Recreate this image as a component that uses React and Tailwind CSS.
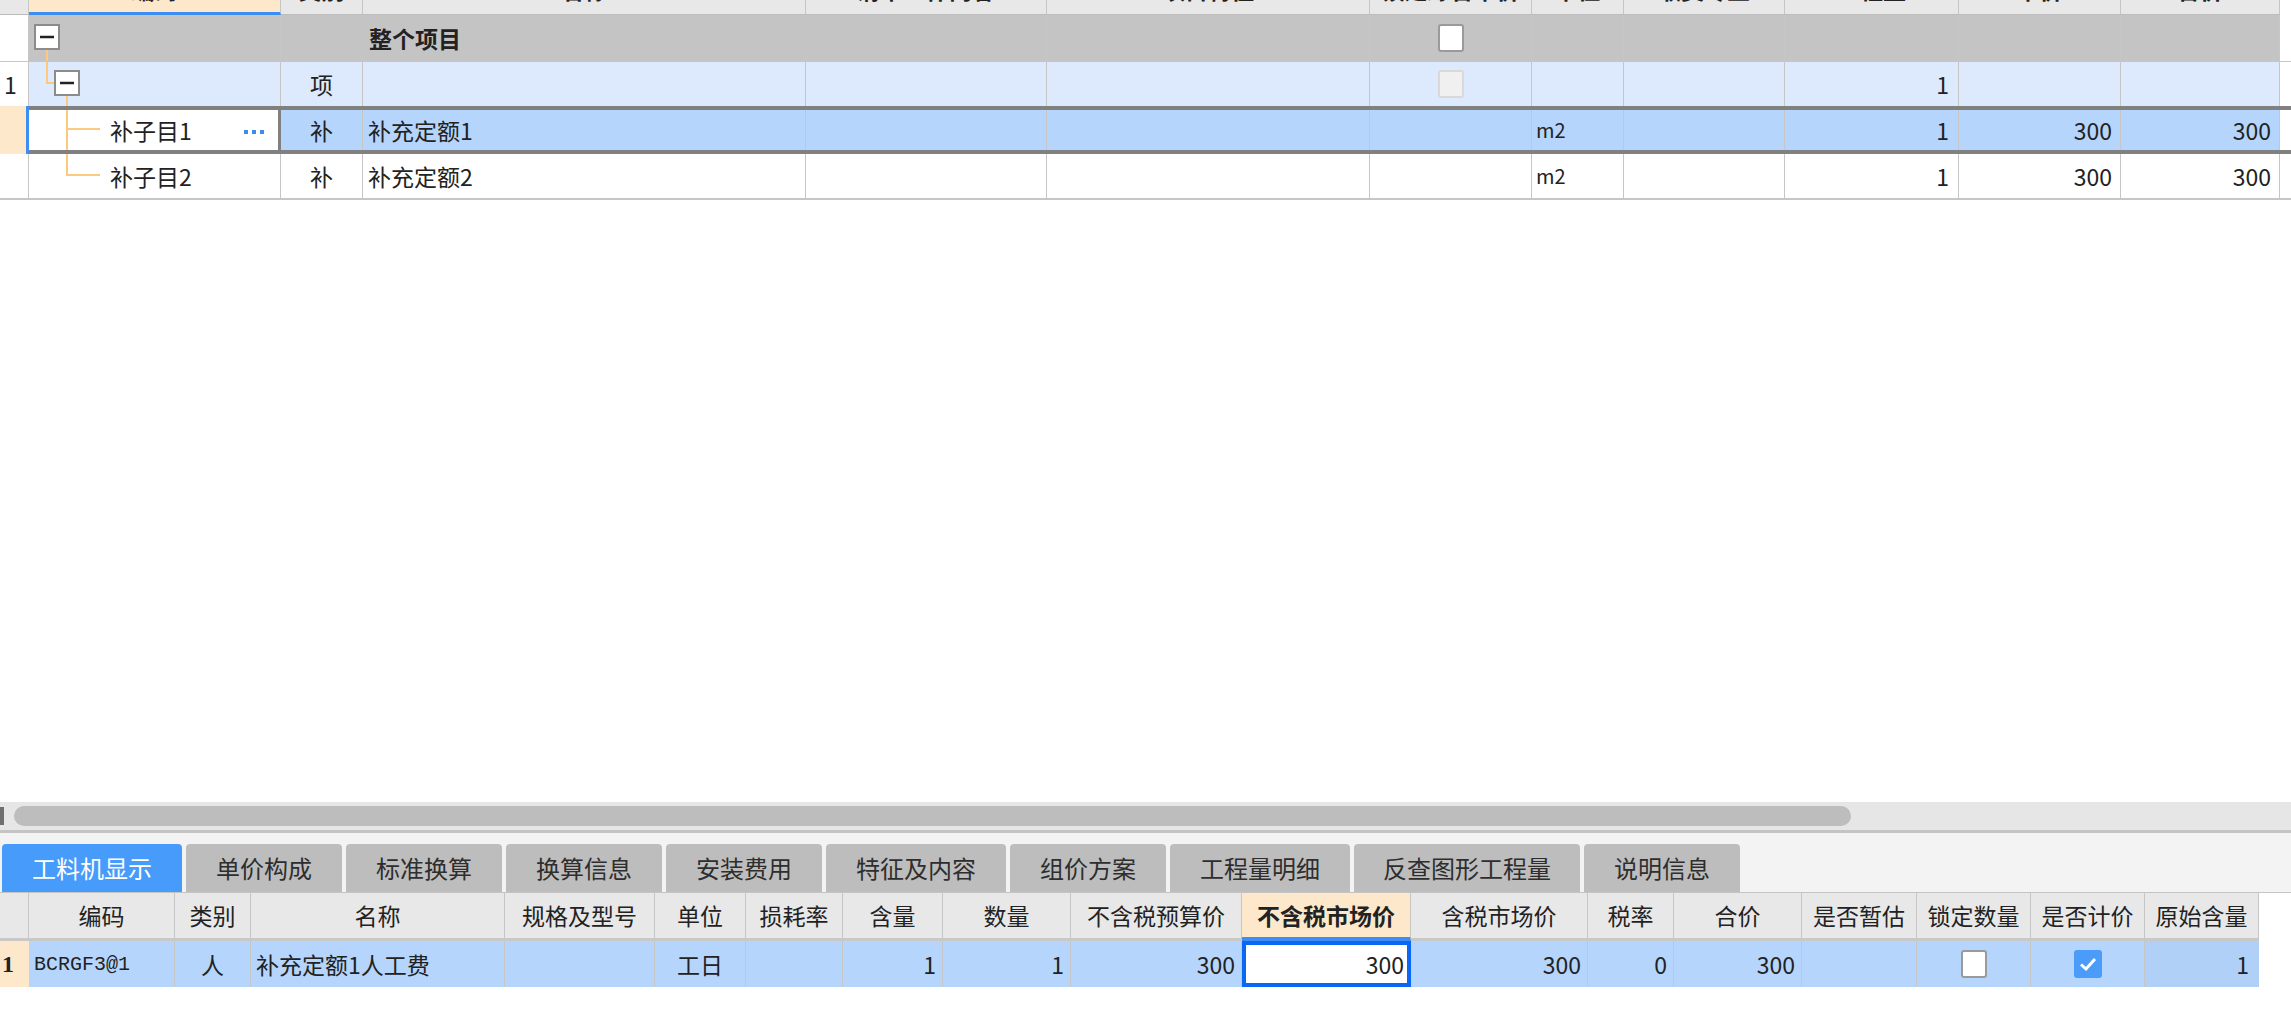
import clsx from "clsx";

const TOP_W = [
  "w-[29px]", "w-[252px]", "w-[82px]", "w-[443px]", "w-[241px]", "w-[323px]",
  "w-[162px]", "w-[92px]", "w-[161px]", "w-[174px]", "w-[162px]", "w-[159px]",
];
const TOP_HEAD = ["", "编码", "类别", "名称", "清单工作内容", "项目特征", "锁定综合单价", "单位", "取费专业", "工程量", "单价", "合价"];

const BOT_W = [
  "w-[29px]", "w-[146px]", "w-[76px]", "w-[254px]", "w-[150px]", "w-[91px]", "w-[97px]",
  "w-[100px]", "w-[128px]", "w-[171px]", "w-[169px]", "w-[177px]", "w-[86px]", "w-[128px]",
  "w-[115px]", "w-[114px]", "w-[114px]", "w-[114px]",
];
const BOT_HEAD = ["", "编码", "类别", "名称", "规格及型号", "单位", "损耗率", "含量", "数量", "不含税预算价", "不含税市场价", "含税市场价", "税率", "合价", "是否暂估", "锁定数量", "是否计价", "原始含量"];

const TABS = [
  { label: "工料机显示", w: "w-[180px]", active: true },
  { label: "单价构成", w: "w-[156px]" },
  { label: "标准换算", w: "w-[156px]" },
  { label: "换算信息", w: "w-[156px]" },
  { label: "安装费用", w: "w-[156px]" },
  { label: "特征及内容", w: "w-[180px]" },
  { label: "组价方案", w: "w-[156px]" },
  { label: "工程量明细", w: "w-[180px]" },
  { label: "反查图形工程量", w: "w-[226px]" },
  { label: "说明信息", w: "w-[156px]" },
];

const LINE = "#fdc97e";

function Cell({ w, className, children }) {
  return (
    <div className={clsx("relative h-full shrink-0 flex items-center border-r border-[#c6c6c6]", w, className)}>
      {children}
    </div>
  );
}

function Check({ checked, disabled }) {
  if (checked) {
    return (
      <div className="w-[28px] h-[28px] rounded-[3px] bg-[#4b9cf9] flex items-center justify-center">
        <svg width="18" height="16" viewBox="0 0 18 16">
          <path d="M2 8.5 L7 13 L16 3" fill="none" stroke="#fff" strokeWidth="3" />
        </svg>
      </div>
    );
  }
  return (
    <div
      className={clsx(
        "w-[26px] h-[28px] rounded-[3px] border-2",
        disabled ? "bg-[#f0f0f0] border-[#d9d9d9]" : "bg-white border-[#9a9a9a]"
      )}
    />
  );
}

function MinusBox({ x, y }) {
  return (
    <g>
      <rect x={x + 1} y={y + 1} width="24" height="24" fill="#fff" stroke="#8c8c8c" strokeWidth="2" />
      <line x1={x + 6} y1={y + 13} x2={x + 20} y2={y + 13} stroke="#222" strokeWidth="2.5" />
    </g>
  );
}

export default function App() {
  const font = "font-['Noto_Sans_CJK_SC','Noto_Sans',sans-serif]";
  return (
    <div className={clsx("w-[2291px] h-[1013px] bg-white overflow-hidden flex flex-col text-[23px] text-[#222]", font)}>
      {/* top grid header, scrolled so only the bottom shows */}
      <div className="flex h-[15px] shrink-0 overflow-hidden">
        {TOP_W.map((w, i) => (
          <div
            key={i}
            className={clsx(
              "h-full shrink-0 flex justify-center items-start border-r border-[#c6c6c6]",
              w,
              i === 1 ? "bg-[#fde8cb] border-b-[3px] border-b-[#3d8ef2]" : "bg-[#e8e8e8] border-b border-b-[#bdbdbd]"
            )}
          >
            <span className="block leading-none -mt-[22px] font-bold">{TOP_HEAD[i]}</span>
          </div>
        ))}
        <div className="flex-1 bg-white" />
      </div>

      {/* row: 整个项目 */}
      <div className="flex h-[47px] shrink-0 border-b border-[#c6c6c6]">
        <Cell w={TOP_W[0]} className="bg-white" />
        <Cell w={TOP_W[1]} className="bg-[#c4c4c4]">
          <svg className="absolute inset-0" width="251" height="46">
            <line x1="18" y1="35" x2="18" y2="46" stroke={LINE} strokeWidth="2" />
            <MinusBox x={5} y={9} />
          </svg>
        </Cell>
        <Cell w={TOP_W[2]} className="bg-[#c4c4c4]" />
        <Cell w={TOP_W[3]} className="bg-[#c4c4c4] pl-[6px] font-bold">整个项目</Cell>
        <Cell w={TOP_W[4]} className="bg-[#c4c4c4]" />
        <Cell w={TOP_W[5]} className="bg-[#c4c4c4]" />
        <Cell w={TOP_W[6]} className="bg-[#c4c4c4] justify-center">
          <Check />
        </Cell>
        {TOP_W.slice(7).map((w, i) => (
          <Cell key={i} w={w} className="bg-[#c4c4c4]" />
        ))}
        <div className="flex-1" />
      </div>

      {/* row: 项 */}
      <div className="flex h-[44px] shrink-0">
        <Cell w={TOP_W[0]} className="bg-white pl-[4px]">1</Cell>
        <Cell w={TOP_W[1]} className="bg-[#dde9fc]">
          <svg className="absolute inset-0" width="251" height="44">
            <polyline points="18,0 18,21 26,21" fill="none" stroke={LINE} strokeWidth="2" />
            <line x1="38" y1="34" x2="38" y2="44" stroke={LINE} strokeWidth="2" />
            <MinusBox x={25} y={8} />
          </svg>
        </Cell>
        <Cell w={TOP_W[2]} className="bg-[#dde9fc] justify-center">项</Cell>
        <Cell w={TOP_W[3]} className="bg-[#dde9fc]" />
        <Cell w={TOP_W[4]} className="bg-[#dde9fc]" />
        <Cell w={TOP_W[5]} className="bg-[#dde9fc]" />
        <Cell w={TOP_W[6]} className="bg-[#dde9fc] justify-center">
          <Check disabled />
        </Cell>
        <Cell w={TOP_W[7]} className="bg-[#dde9fc]" />
        <Cell w={TOP_W[8]} className="bg-[#dde9fc]" />
        <Cell w={TOP_W[9]} className="bg-[#dde9fc] justify-end pr-[9px]">1</Cell>
        <Cell w={TOP_W[10]} className="bg-[#dde9fc]" />
        <Cell w={TOP_W[11]} className="bg-[#dde9fc]" />
        <div className="flex-1" />
      </div>

      {/* row: 补子目1 (selected) */}
      <div className="flex h-[48px] shrink-0">
        <div className="w-[29px] h-full shrink-0 bg-[#fde8cb] border-r-[3px] border-[#3d8ef2]" />
        <div className="flex flex-1 h-full border-y-4 border-[#808080]">
          <div className="relative w-[252px] h-full shrink-0 flex items-center bg-white border-r-[3px] border-[#808080] pl-[81px] pr-[14px]">
            <svg className="absolute inset-0" width="249" height="40">
              <polyline points="38,0 38,40" fill="none" stroke={LINE} strokeWidth="2" />
              <line x1="38" y1="19" x2="71" y2="19" stroke={LINE} strokeWidth="2" />
            </svg>
            <span className="relative">补子目1</span>
            <div className="ml-auto flex gap-[4px] mt-[4px]">
              <span className="w-[4px] h-[4px] bg-[#3a8ee6]" />
              <span className="w-[4px] h-[4px] bg-[#3a8ee6]" />
              <span className="w-[4px] h-[4px] bg-[#3a8ee6]" />
            </div>
          </div>
          <Cell w={TOP_W[2]} className="bg-[#b5d5fd] justify-center">补</Cell>
          <Cell w={TOP_W[3]} className="bg-[#b5d5fd] pl-[5px]">补充定额1</Cell>
          <Cell w={TOP_W[4]} className="bg-[#b5d5fd]" />
          <Cell w={TOP_W[5]} className="bg-[#b5d5fd]" />
          <Cell w={TOP_W[6]} className="bg-[#b5d5fd]" />
          <Cell w={TOP_W[7]} className="bg-[#b5d5fd] pl-[4px] text-[20px]">m2</Cell>
          <Cell w={TOP_W[8]} className="bg-[#b5d5fd]" />
          <Cell w={TOP_W[9]} className="bg-[#b5d5fd] justify-end pr-[9px]">1</Cell>
          <Cell w={TOP_W[10]} className="bg-[#b5d5fd] justify-end pr-[8px]">300</Cell>
          <Cell w={TOP_W[11]} className="bg-[#b5d5fd] justify-end pr-[8px]">300</Cell>
          <div className="flex-1 bg-white" />
        </div>
      </div>

      {/* row: 补子目2 */}
      <div className="flex h-[46px] shrink-0 border-b-2 border-[#c6c6c6]">
        <Cell w={TOP_W[0]} className="bg-white" />
        <Cell w={TOP_W[1]} className="bg-white pl-[81px]">
          <svg className="absolute inset-0" width="251" height="44">
            <polyline points="38,0 38,21 71,21" fill="none" stroke={LINE} strokeWidth="2" />
          </svg>
          <span className="relative">补子目2</span>
        </Cell>
        <Cell w={TOP_W[2]} className="justify-center">补</Cell>
        <Cell w={TOP_W[3]} className="pl-[5px]">补充定额2</Cell>
        <Cell w={TOP_W[4]} />
        <Cell w={TOP_W[5]} />
        <Cell w={TOP_W[6]} />
        <Cell w={TOP_W[7]} className="pl-[4px] text-[20px]">m2</Cell>
        <Cell w={TOP_W[8]} />
        <Cell w={TOP_W[9]} className="justify-end pr-[9px]">1</Cell>
        <Cell w={TOP_W[10]} className="justify-end pr-[8px]">300</Cell>
        <Cell w={TOP_W[11]} className="justify-end pr-[8px]">300</Cell>
        <div className="flex-1" />
      </div>

      <div className="h-[602px] shrink-0 bg-white" />

      {/* horizontal scrollbar */}
      <div className="h-[28px] shrink-0 bg-[#e6e6e6] flex items-center">
        <div className="w-[4px] h-[18px] bg-[#6f6f6f]" />
        <div className="ml-[10px] w-[1837px] h-[20px] rounded-full bg-[#bdbdbd]" />
      </div>
      <div className="h-[3px] shrink-0 bg-[#c4c4c4]" />

      {/* tab strip */}
      <div className="h-[60px] shrink-0 bg-[#f3f3f3] border-b border-[#c4c4c4] pt-[11px] pl-[2px] flex gap-[4px]">
        {TABS.map((t) => (
          <div
            key={t.label}
            className={clsx(
              "h-[48px] shrink-0 rounded-t-[4px] flex items-center justify-center text-[24px]",
              t.w,
              t.active ? "bg-[#479bfa] text-white" : "bg-[#bdbdbd] text-[#2e2e2e]"
            )}
          >
            {t.label}
          </div>
        ))}
      </div>

      {/* bottom grid header */}
      <div className="flex h-[48px] shrink-0">
        {BOT_W.map((w, i) => (
          <div
            key={i}
            className={clsx(
              "h-full shrink-0 flex items-center justify-center border-r border-[#c6c6c6]",
              w,
              i === 10
                ? "bg-[#fde8cb] font-bold border-b-4 border-b-[#3d8ef2]"
                : "bg-[#e8e8e8] border-b-[3px] border-b-[#c8c8c8]"
            )}
          >
            {BOT_HEAD[i]}
          </div>
        ))}
      </div>

      {/* bottom grid row */}
      <div className="flex h-[46px] shrink-0">
        <div className="w-[29px] h-full shrink-0 bg-[#fde8cb] flex items-center pl-[2px] font-bold font-['Liberation_Serif',serif] text-[24px]">1</div>
        <div className="flex h-full outline-4 outline-[#0a66f5] -outline-offset-4">
          <Cell w={BOT_W[1]} className="bg-[#b5d5fd] pl-[5px] pt-[1px] font-['Liberation_Mono',monospace] text-[20px]">BCRGF3@1</Cell>
          <Cell w={BOT_W[2]} className="bg-[#b5d5fd] justify-center">人</Cell>
          <Cell w={BOT_W[3]} className="bg-[#b5d5fd] pl-[5px]">补充定额1人工费</Cell>
          <Cell w={BOT_W[4]} className="bg-[#b5d5fd]" />
          <Cell w={BOT_W[5]} className="bg-[#b5d5fd] justify-center">工日</Cell>
          <Cell w={BOT_W[6]} className="bg-[#b5d5fd]" />
          <Cell w={BOT_W[7]} className="bg-[#b5d5fd] justify-end pr-[6px]">1</Cell>
          <Cell w={BOT_W[8]} className="bg-[#b5d5fd] justify-end pr-[6px]">1</Cell>
          <Cell w={BOT_W[9]} className="bg-[#b5d5fd] justify-end pr-[6px]">300</Cell>
          <div className="h-full w-[169px] shrink-0 flex items-center justify-end pr-[3px] bg-white border-x-4 border-[#0a66f5]">300</div>
          <Cell w={BOT_W[11]} className="bg-[#b5d5fd] justify-end pr-[6px]">300</Cell>
          <Cell w={BOT_W[12]} className="bg-[#b5d5fd] justify-end pr-[6px]">0</Cell>
          <Cell w={BOT_W[13]} className="bg-[#b5d5fd] justify-end pr-[6px]">300</Cell>
          <Cell w={BOT_W[14]} className="bg-[#b5d5fd]" />
          <Cell w={BOT_W[15]} className="bg-[#b5d5fd] justify-center">
            <Check />
          </Cell>
          <Cell w={BOT_W[16]} className="bg-[#b5d5fd] justify-center">
            <Check checked />
          </Cell>
          <Cell w={BOT_W[17]} className="bg-[#b0d0f8] justify-end pr-[10px] border-r-0">1</Cell>
        </div>
      </div>
    </div>
  );
}
